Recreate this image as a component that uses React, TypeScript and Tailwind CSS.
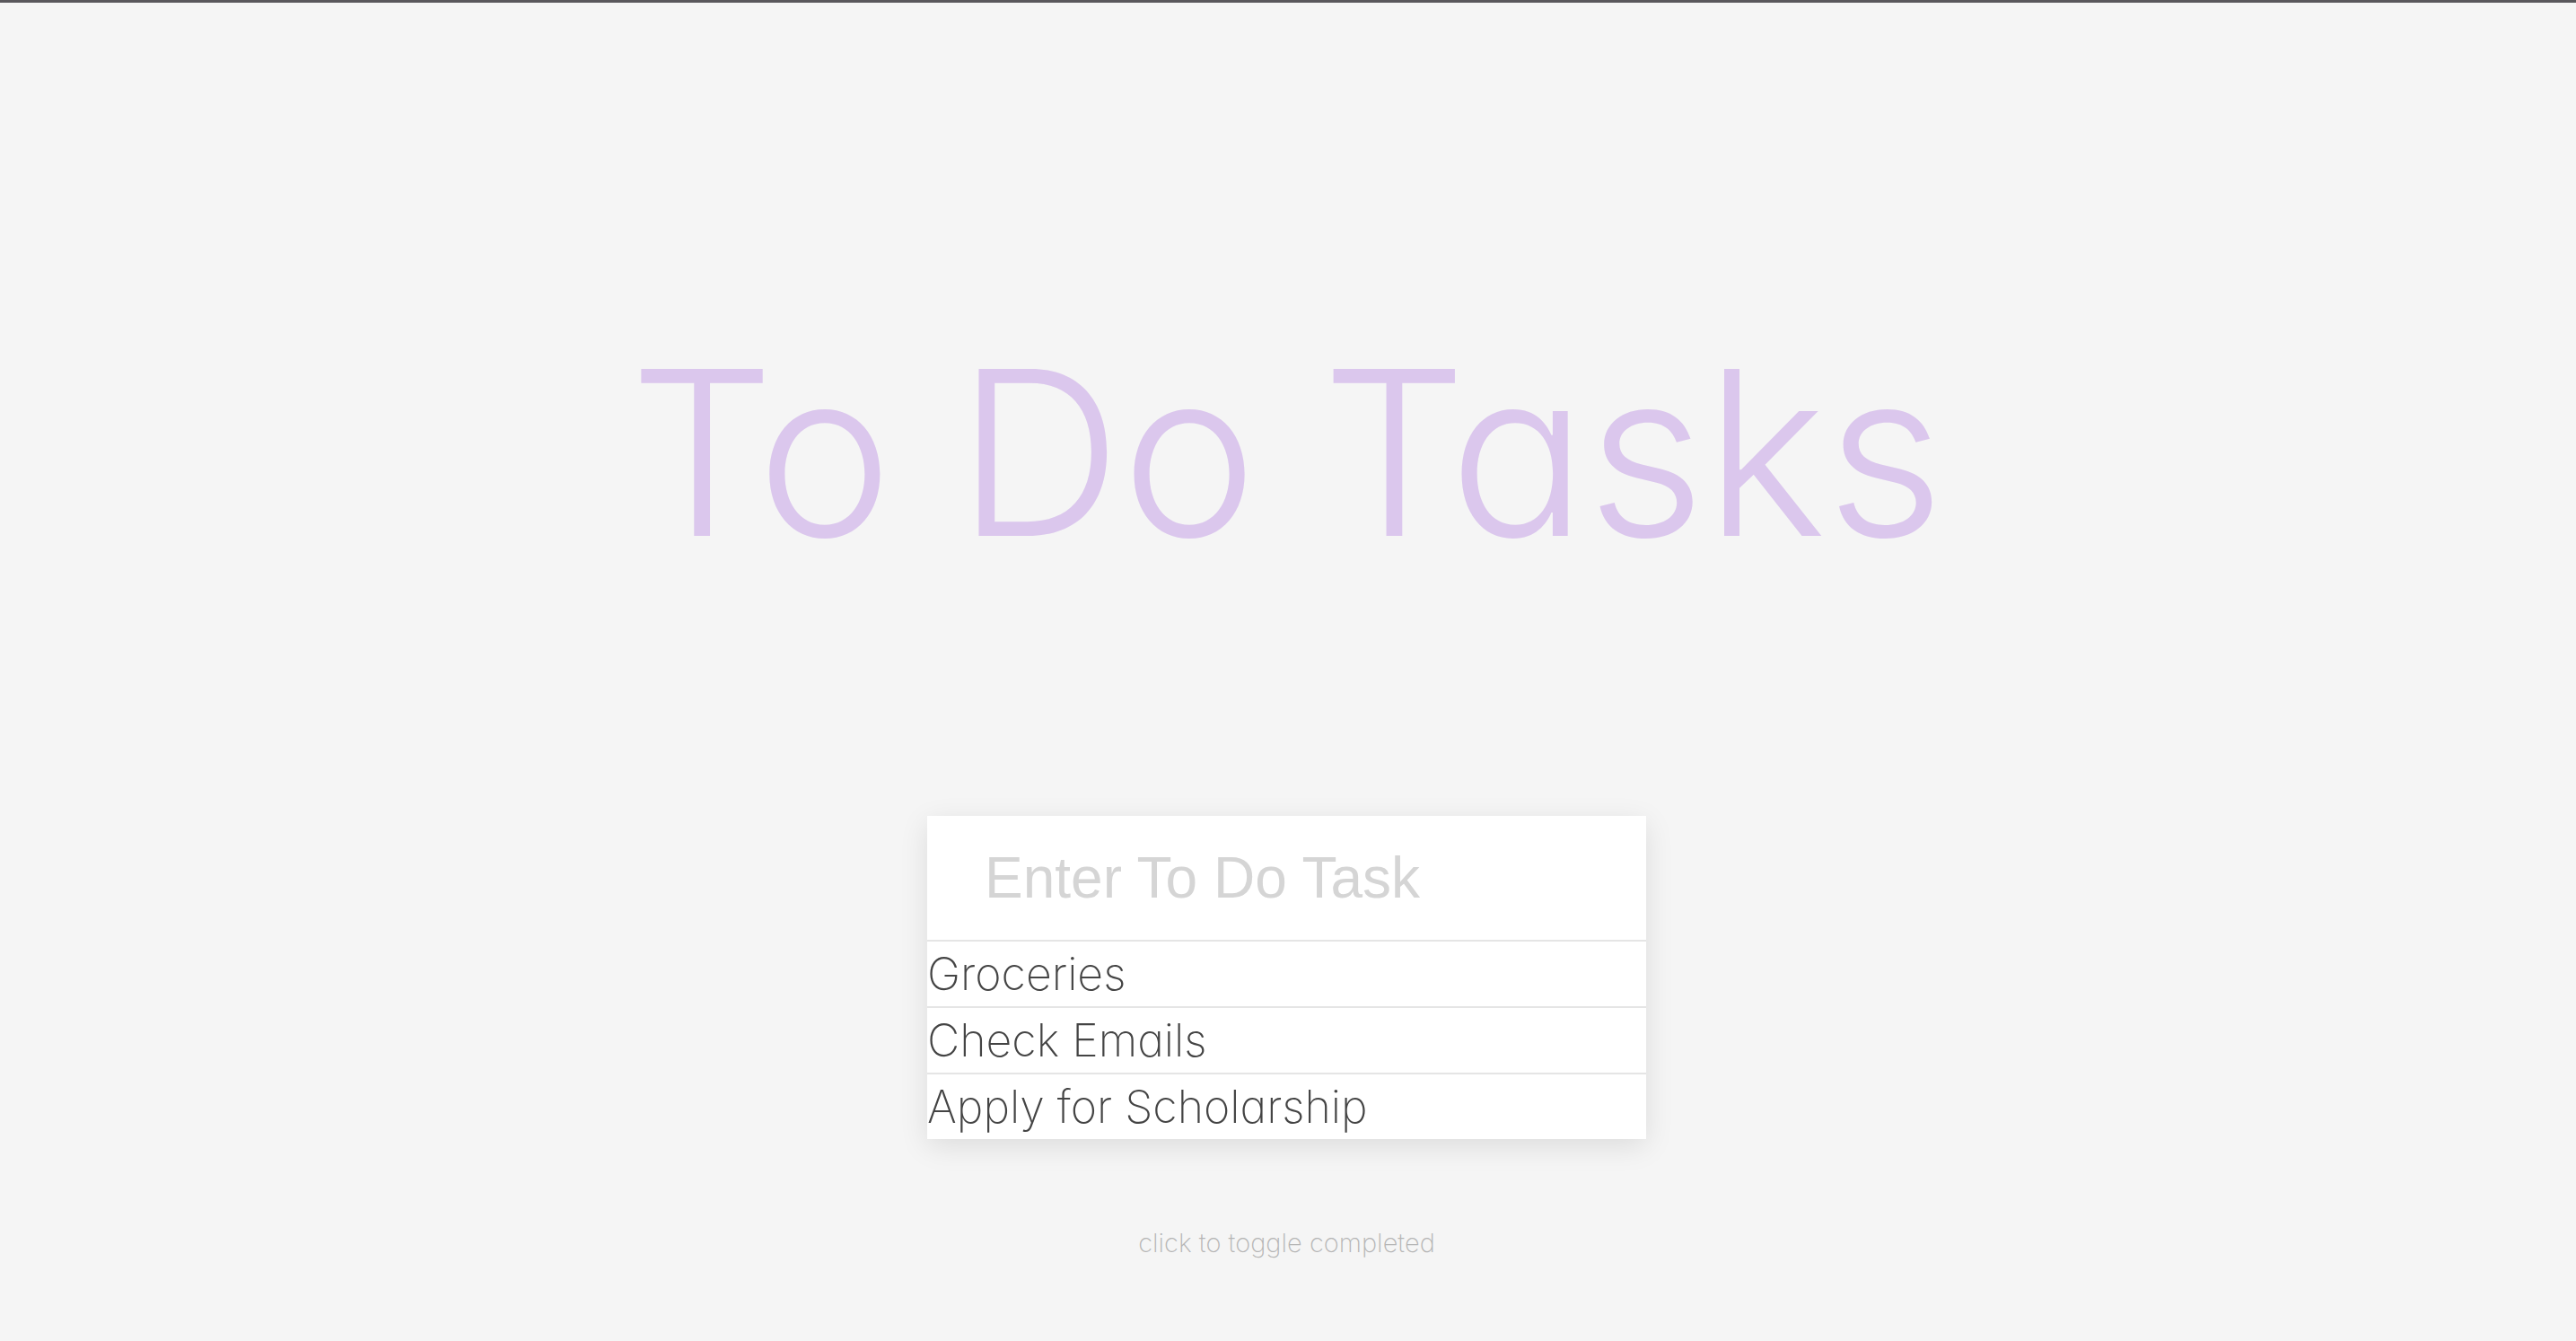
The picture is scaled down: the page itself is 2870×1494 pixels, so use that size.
import { useState } from "react";
import type { FormEvent } from "react";

type Todo = { id: number; text: string; completed: boolean };

const initialTodos: Todo[] = [
  { id: 1, text: "Groceries", completed: false },
  { id: 2, text: "Check Emails", completed: false },
  { id: 3, text: "Apply for Scholarship", completed: false },
];

export default function App() {
  const [todos, setTodos] = useState<Todo[]>(initialTodos);
  const [text, setText] = useState("");

  const addTodo = (event: FormEvent) => {
    event.preventDefault();
    const value = text.trim();
    if (!value) return;
    setTodos([...todos, { id: Date.now(), text: value, completed: false }]);
    setText("");
  };

  const toggle = (id: number) =>
    setTodos(todos.map((t) => (t.id === id ? { ...t, completed: !t.completed } : t)));

  return (
    <main className="flex min-h-screen flex-col items-center border-t-3 border-[#5a585c] bg-[#f5f5f5] pr-[3px] font-['Inter',sans-serif] text-[#444444] [font-feature-settings:'cv11']">
      <h1 className="mt-[310px] text-center text-[255px] leading-[384px] font-light whitespace-nowrap text-[#dbc7ed]">
        To Do Tasks
      </h1>
      <form
        onSubmit={addTodo}
        className="mt-[212px] w-full max-w-[801px] bg-white shadow-[0_8px_30px_rgba(0,0,0,0.1)]"
      >
        <input
          type="text"
          aria-label="Enter To Do Task"
          placeholder="Enter To Do Task"
          autoComplete="off"
          value={text}
          onChange={(event) => setText(event.target.value)}
          className="block w-full px-16 py-8 font-['Liberation_Sans',Arial,sans-serif] text-[64px] leading-[74px] outline-none placeholder:text-[#d5d5d5]"
        />
        <ul>
          {todos.map((todo) => (
            <li key={todo.id} className="border-t-2 border-[#e5e5e5]">
              <button
                type="button"
                aria-pressed={todo.completed}
                onClick={() => toggle(todo.id)}
                className="block w-full cursor-pointer text-left text-[50px] leading-[72px] font-extralight aria-pressed:text-[#b6b6b6] aria-pressed:line-through"
              >
                {todo.text}
              </button>
            </li>
          ))}
        </ul>
      </form>
      <small className="mt-24 text-[29px] leading-[40px] font-extralight text-[#b5b5b5]">
        click to toggle completed
      </small>
    </main>
  );
}
